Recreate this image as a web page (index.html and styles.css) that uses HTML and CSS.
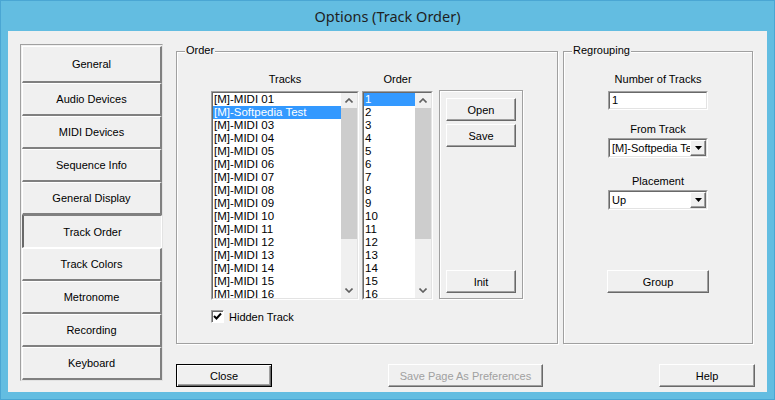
FILE: index.html
```html
<!DOCTYPE html>
<html lang="en">
<head>
    <meta charset="UTF-8">
    <title>Options (Track Order)</title>
    <link rel="stylesheet" href="styles.css">
</head>
<body>
    <div class="window">
        <div class="titlebar">Options (Track Order)</div>
        <div class="client">

            <!-- page tabs down the left -->
            <div class="tabs">
                <div class="tab tab-first">General</div>
                <div class="tab">Audio Devices</div>
                <div class="tab">MIDI Devices</div>
                <div class="tab">Sequence Info</div>
                <div class="tab">General Display</div>
                <div class="tab active">Track Order</div>
                <div class="tab">Track Colors</div>
                <div class="tab">Metronome</div>
                <div class="tab">Recording</div>
                <div class="tab">Keyboard</div>
            </div>

            <div class="groups">
                <div class="group group-order">
                    <div class="legend">Order</div>
                    <div class="order-grid">
                        <div class="col-head">Tracks</div>
                        <div class="col-head">Order</div>
                        <div></div>

                        <div class="listbox list-tracks">
                            <div class="listbox-in">
                                <div class="items">
                                    <div class="item">[M]-MIDI 01</div>
                                    <div class="item selected">[M]-Softpedia Test</div>
                                    <div class="item">[M]-MIDI 03</div>
                                    <div class="item">[M]-MIDI 04</div>
                                    <div class="item">[M]-MIDI 05</div>
                                    <div class="item">[M]-MIDI 06</div>
                                    <div class="item">[M]-MIDI 07</div>
                                    <div class="item">[M]-MIDI 08</div>
                                    <div class="item">[M]-MIDI 09</div>
                                    <div class="item">[M]-MIDI 10</div>
                                    <div class="item">[M]-MIDI 11</div>
                                    <div class="item">[M]-MIDI 12</div>
                                    <div class="item">[M]-MIDI 13</div>
                                    <div class="item">[M]-MIDI 14</div>
                                    <div class="item">[M]-MIDI 15</div>
                                    <div class="item">[M]-MIDI 16</div>
                                </div>
                                <div class="vscroll">
                                    <div class="arrow"><svg width="8" height="5" viewBox="0 0 8 5"><polyline points="0.5,4.5 4,1 7.5,4.5" fill="none" stroke="#606060" stroke-width="1.6"/></svg></div>
                                    <div class="thumb"></div>
                                    <div class="track"></div>
                                    <div class="arrow"><svg width="8" height="5" viewBox="0 0 8 5"><polyline points="0.5,0.5 4,4 7.5,0.5" fill="none" stroke="#606060" stroke-width="1.6"/></svg></div>
                                </div>
                            </div>
                        </div>

                        <div class="listbox list-order">
                            <div class="listbox-in">
                                <div class="items">
                                    <div class="item selected">1</div>
                                    <div class="item">2</div>
                                    <div class="item">3</div>
                                    <div class="item">4</div>
                                    <div class="item">5</div>
                                    <div class="item">6</div>
                                    <div class="item">7</div>
                                    <div class="item">8</div>
                                    <div class="item">9</div>
                                    <div class="item">10</div>
                                    <div class="item">11</div>
                                    <div class="item">12</div>
                                    <div class="item">13</div>
                                    <div class="item">14</div>
                                    <div class="item">15</div>
                                    <div class="item">16</div>
                                </div>
                                <div class="vscroll">
                                    <div class="arrow"><svg width="8" height="5" viewBox="0 0 8 5"><polyline points="0.5,4.5 4,1 7.5,4.5" fill="none" stroke="#606060" stroke-width="1.6"/></svg></div>
                                    <div class="thumb"></div>
                                    <div class="track"></div>
                                    <div class="arrow"><svg width="8" height="5" viewBox="0 0 8 5"><polyline points="0.5,0.5 4,4 7.5,0.5" fill="none" stroke="#606060" stroke-width="1.6"/></svg></div>
                                </div>
                            </div>
                        </div>

                        <div class="btn-panel">
                            <div class="btn">Open</div>
                            <div class="btn">Save</div>
                            <div class="btn btn-init">Init</div>
                        </div>
                    </div>

                    <div class="check-row">
                        <span class="checkbox"><svg width="9" height="9" viewBox="0 0 9 9"><polyline points="1,4 3.5,6.5 8,1.5" fill="none" stroke="#000" stroke-width="2"/></svg></span>
                        Hidden Track
                    </div>
                </div>

                <div class="group group-regroup">
                    <div class="legend">Regrouping</div>
                    <div class="field-label first">Number of Tracks</div>
                    <div class="textbox"><div class="field-in">1</div></div>
                    <div class="field-label">From Track</div>
                    <div class="combo">
                        <div class="combo-in">
                            <div class="combo-text">[M]-Softpedia Test</div>
                            <div class="combo-btn"><svg width="7" height="4" viewBox="0 0 7 4"><polygon points="0,0 7,0 3.5,4" fill="#000"/></svg></div>
                        </div>
                    </div>
                    <div class="field-label third">Placement</div>
                    <div class="combo">
                        <div class="combo-in">
                            <div class="combo-text">Up</div>
                            <div class="combo-btn"><svg width="7" height="4" viewBox="0 0 7 4"><polygon points="0,0 7,0 3.5,4" fill="#000"/></svg></div>
                        </div>
                    </div>
                    <div class="btn btn-group">Group</div>
                </div>
            </div>

            <div class="footer">
                <div class="btn btn-wide btn-default">Close</div>
                <div class="btn btn-prefs disabled">Save Page As Preferences</div>
                <div class="btn btn-wide">Help</div>
            </div>
        </div>
    </div>
</body>
</html>
```

FILE: styles.css
```css
/* dialog frame */
body, html {
    margin: 0;
    padding: 0;
    background: #63bde1;
}
.window {
    box-sizing: border-box;
    width: 775px;
    height: 400px;
    border: 1px solid #4aa6d3;
    background: #63bde1;
    font-family: "Liberation Sans", Arial, sans-serif;
    font-size: 11px;
    color: #000;
}
.titlebar {
    height: 30px;
    line-height: 30px;
    text-align: center;
    font-family: "Noto Sans", "Open Sans", sans-serif;
    font-size: 14.5px;
    color: #1f1f1f;
}
.client {
    width: 759px;
    height: 361px;
    margin: 0 7px;
    box-sizing: border-box;
    padding: 13px 0 0 12px;
    background: #f0f0f0;
    display: grid;
    grid-template-columns: 143px 579px;
    grid-template-rows: auto auto;
    column-gap: 13px;
    align-items: start;
}

/* left page tabs */
.tabs {
    grid-row: 1 / span 2;
    box-sizing: border-box;
    width: 143px;
    height: 337px;
    padding: 1px 0 0 1px;
    border: 1px solid;
    border-color: #a0a0a0 #e3e3e3 #e3e3e3 #a0a0a0;
}
.tab {
    box-sizing: border-box;
    width: 140px;
    height: 33px;
    display: flex;
    align-items: center;
    justify-content: center;
    border-style: solid;
    border-width: 1px 2px 2px 1px;
    border-color: #fff #808080 #808080 #fff;
}
.tab-first {
    height: 37px;
}
.tab.active {
    border-width: 1px 1px 1px 2px;
    border-color: #808080 #fff #fff #696969;
}

/* group boxes */
.groups {
    display: flex;
    gap: 5px;
    margin-top: 7px;
}
.group {
    box-sizing: border-box;
    height: 293px;
    border: 1px solid #a0a0a0;
    box-shadow: inset 1px 1px #fff, 1px 1px #fff;
}
.group-order {
    width: 382px;
}
.group-regroup {
    width: 190px;
    display: flex;
    flex-direction: column;
    align-items: center;
}
.legend {
    align-self: flex-start;
    width: fit-content;
    margin: -8px 0 0 8px;
    padding: 0 1px;
    line-height: 13px;
    background: #f0f0f0;
}

/* order lists */
.order-grid {
    display: grid;
    grid-template-columns: 148px 71px 87px;
    grid-template-rows: 13px 209px;
    column-gap: 3px;
    row-gap: 5px;
    margin: 16px 0 0 34px;
}
.col-head {
    line-height: 13px;
    text-align: center;
}
.listbox {
    box-sizing: border-box;
    height: 209px;
    border: 1px solid;
    border-color: #a0a0a0 #fff #fff #a0a0a0;
}
.listbox-in {
    height: 100%;
    box-sizing: border-box;
    border: 1px solid;
    border-color: #696969 #e3e3e3 #e3e3e3 #696969;
    background: #fff;
    display: flex;
}
.items {
    flex: 1;
    overflow: hidden;
}
.item {
    height: 13px;
    line-height: 13px;
    padding-left: 1px;
    white-space: nowrap;
    font-size: 11.5px;
}
.item.selected {
    background: #3399ff;
    color: #fff;
}
.vscroll {
    width: 16px;
    display: flex;
    flex-direction: column;
    background: #f0f0f0;
}
.arrow {
    height: 15px;
    display: flex;
    align-items: center;
    justify-content: center;
}
.thumb {
    height: 131px;
    background: #cdcdcd;
}
.track {
    flex: 1;
}

/* buttons */
.btn {
    box-sizing: border-box;
    height: 23px;
    display: flex;
    align-items: center;
    justify-content: center;
    background: #f0f0f0;
    border: 1px solid;
    border-color: #fff #696969 #696969 #fff;
    box-shadow: inset -1px -1px #a0a0a0;
}
.btn-panel {
    box-sizing: border-box;
    margin: -1px 0 0 3px;
    height: 209px;
    padding: 7px 6px 5px 6px;
    border: 1px solid #a0a0a0;
    box-shadow: inset 1px 1px #fff, 1px 1px #fff;
    display: flex;
    flex-direction: column;
    gap: 3px;
}
.btn-init {
    margin-top: auto;
}
.btn-group {
    width: 102px;
    margin-top: 60px;
}
.btn-wide {
    width: 96px;
}
.btn-prefs {
    width: 155px;
}
.btn-default {
    border: 1px solid #000;
    box-shadow: inset 1px 1px #fff, inset -1px -1px #696969, inset -2px -2px #a0a0a0;
}
.btn.disabled {
    color: #a0a0a0;
}

.check-row {
    display: flex;
    align-items: center;
    gap: 5px;
    height: 13px;
    margin: 10px 0 0 34px;
}
.checkbox {
    box-sizing: border-box;
    width: 13px;
    height: 13px;
    display: flex;
    align-items: center;
    justify-content: center;
    background: #fff;
    border: 1px solid;
    border-color: #a0a0a0 #fff #fff #a0a0a0;
    box-shadow: inset 1px 1px #696969;
}

/* regrouping fields */
.field-label {
    line-height: 13px;
    margin-top: 13px;
}
.field-label.first {
    margin-top: 16px;
}
.field-label.third {
    margin-top: 17px;
}
.textbox, .combo {
    box-sizing: border-box;
    width: 100px;
    border: 1px solid;
    border-color: #a0a0a0 #fff #fff #a0a0a0;
}
.textbox {
    height: 19px;
    margin-top: 5px;
}
.combo {
    height: 20px;
    margin-top: 2px;
}
.field-in, .combo-in {
    height: 100%;
    box-sizing: border-box;
    border: 1px solid;
    border-color: #696969 #e3e3e3 #e3e3e3 #696969;
    background: #fff;
}
.field-in {
    padding-left: 2px;
    line-height: 15px;
}
.combo-in {
    display: flex;
}
.combo-text {
    flex: 1;
    overflow: hidden;
    white-space: nowrap;
    padding-left: 2px;
    line-height: 16px;
}
.combo-btn {
    box-sizing: border-box;
    width: 16px;
    height: 16px;
    display: flex;
    align-items: center;
    justify-content: center;
    background: #f0f0f0;
    border: 1px solid;
    border-color: #fff #696969 #696969 #fff;
    box-shadow: inset -1px -1px #a0a0a0;
}

.footer {
    display: flex;
    justify-content: space-between;
    margin-top: 15px;
}
```
